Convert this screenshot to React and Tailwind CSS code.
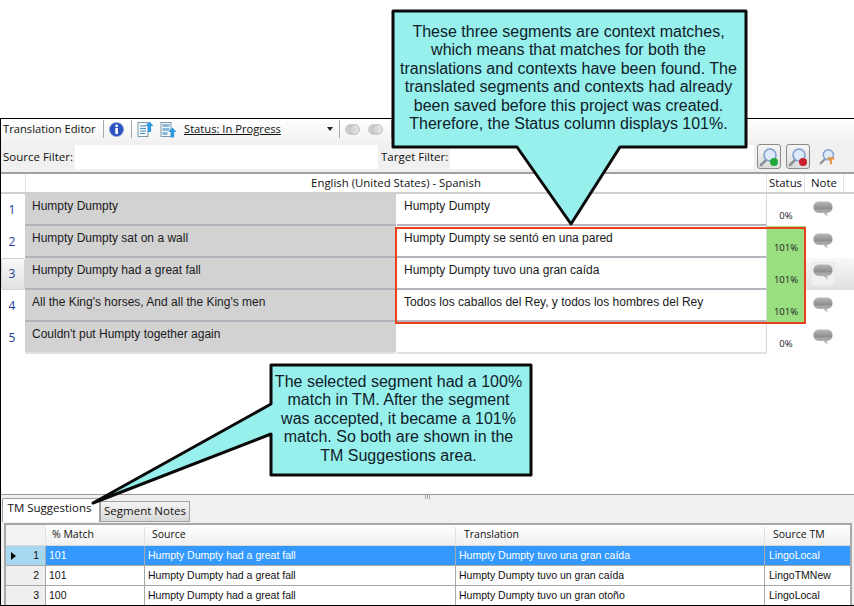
const segments = [
  { n: 1, source: "Humpty Dumpty", target: "Humpty Dumpty", status: "0%" },
  { n: 2, source: "Humpty Dumpty sat on a wall", target: "Humpty Dumpty se sentó en una pared", status: "101%" },
  { n: 3, source: "Humpty Dumpty had a great fall", target: "Humpty Dumpty tuvo una gran caída", status: "101%", active: true },
  { n: 4, source: "All the King's horses, And all the King's men", target: "Todos los caballos del Rey, y todos los hombres del Rey", status: "101%" },
  { n: 5, source: "Couldn't put Humpty together again", target: "", status: "0%", last: true },
];

const suggestions = [
  { n: 1, match: "101", source: "Humpty Dumpty had a great fall", target: "Humpty Dumpty tuvo una gran caída", tm: "LingoLocal", selected: true },
  { n: 2, match: "101", source: "Humpty Dumpty had a great fall", target: "Humpty Dumpty tuvo un gran caída", tm: "LingoTMNew" },
  { n: 3, match: "100", source: "Humpty Dumpty had a great fall", target: "Humpty Dumpty tuvo un gran otoño", tm: "LingoLocal" },
];

function Sep() {
  return <div className="h-[18px] w-px bg-[#a8a8a8]" />;
}

function InfoIcon() {
  return (
    <svg width="15" height="15" viewBox="0 0 15 15">
      <circle cx="7.5" cy="7.5" r="7" fill="#2a52c0" stroke="#8a9ad0" strokeWidth="0.8" />
      <rect x="6.3" y="6" width="2.6" height="6" fill="#fff" />
      <circle cx="7.6" cy="3.9" r="1.4" fill="#fff" />
    </svg>
  );
}

function DocArrowIcon({ variant }) {
  return (
    <svg width="17" height="17" viewBox="0 0 17 17">
      <rect x="1" y="1.5" width="10" height="14" fill="#f4f8fa" stroke="#7f98a8" />
      {variant === "a" ? (
        <>
          <path d="M3 5h6M3 7.5h6M3 10h6M3 12.5h5" stroke="#4a90c8" strokeWidth="1" />
          <path d="M12.5 0.5l4 4.5h-2.4v6h-3.2v-6h-2.4z" fill="#2b9be0" />
        </>
      ) : (
        <>
          <rect x="2.5" y="3" width="7" height="3" fill="#8ab8d8" />
          <rect x="2.5" y="7" width="7" height="3" fill="#8ab8d8" />
          <rect x="2.5" y="11" width="5" height="3" fill="#8ab8d8" />
          <path d="M12.5 6.5l4 4.5h-2.4v5.5h-3.2v-5.5h-2.4z" fill="#2b9be0" />
        </>
      )}
    </svg>
  );
}

function RingsIcon() {
  return (
    <svg width="15" height="13" viewBox="0 0 15 13">
      <circle cx="5.5" cy="6.5" r="4.8" fill="#d0d0d0" stroke="#bcbcbc" />
      <circle cx="9.5" cy="6.5" r="4.8" fill="#dcdcdc" fillOpacity="0.7" stroke="#b4b4b4" />
    </svg>
  );
}

function MagnifierIcon({ dot, size = 20 }) {
  return (
    <svg width={size} height={size} viewBox="0 0 20 20">
      <path d="M2 18l6-6" stroke="#8a8f98" strokeWidth="2.6" strokeLinecap="round" />
      <circle cx="11" cy="8" r="6" fill="#dbe9f8" stroke="#7f9fd0" strokeWidth="1.6" />
      {dot === "tool" ? (
        <path d="M10 11h8v2.4h-2.8V19h-2.4v-5.6H10z" fill="#e8943a" />
      ) : (
        <circle cx="15" cy="15" r="4" fill={dot} />
      )}
    </svg>
  );
}

function NoteIcon() {
  return (
    <svg width="20" height="17" viewBox="0 0 20 17">
      <defs>
        <linearGradient id="noteFill" x1="0" y1="0" x2="0" y2="1">
          <stop offset="0" stopColor="#b8b8b8" />
          <stop offset="0.45" stopColor="#8e8e8e" />
          <stop offset="0.55" stopColor="#a4a4a4" />
          <stop offset="1" stopColor="#c0c0c0" />
        </linearGradient>
      </defs>
      <path d="M6 .5h8c3.300 0 5.500 2.300 5.500 5.800s-2.200 5.700-5.500 5.700h-.2l1.400 4-4.800-4H6C2.700 12 .5 9.800.5 6.300S2.700.5 6 .5z" fill="url(#noteFill)" />
    </svg>
  );
}

function FilterButton({ dot }) {
  return (
    <div className="flex h-[25px] w-[24px] items-center justify-center rounded-[3px] border border-[#8a8a8a] bg-gradient-to-b from-[#f6f6f6] to-[#dcdcdc]">
      <MagnifierIcon dot={dot} />
    </div>
  );
}

function Toolbar() {
  return (
    <div className="font-['Open_Sans',sans-serif] text-[#111]">
      <div className="flex h-[22px] items-center bg-gradient-to-b from-white to-[#f3f3f3] pb-[2px] text-[11.2px]">
        <span className="ml-[2px] w-[100px] whitespace-nowrap">Translation Editor</span>
        <Sep />
        <div className="ml-[5px] flex w-[22px]"><InfoIcon /></div>
        <Sep />
        <div className="ml-[5px] flex w-[23px]"><DocArrowIcon variant="a" /></div>
        <div className="flex w-[24px]"><DocArrowIcon variant="b" /></div>
        <span className="w-[143px] underline">Status: In Progress</span>
        <span className="h-0 w-0 border-x-[3px] border-t-[4px] border-x-transparent border-t-[#222]" />
        <div className="ml-[6px]"><Sep /></div>
        <div className="ml-[5px] flex w-[23px]"><RingsIcon /></div>
        <div className="flex w-[23px]"><RingsIcon /></div>
        <Sep />
      </div>
      <div className="flex h-[31px] items-center bg-[#f0f0f0] text-[11.5px]">
        <span className="ml-[2px] w-[72px] whitespace-nowrap">Source Filter:</span>
        <div className="h-[24px] w-[303px] bg-white" />
        <span className="ml-[3px] w-[69px] whitespace-nowrap">Target Filter:</span>
        <div className="h-[24px] w-[304px] bg-white" />
        <div className="ml-[3px]"><FilterButton dot="#22a83a" /></div>
        <div className="ml-[5px]"><FilterButton dot="#c8202c" /></div>
        <div className="ml-[9px] flex"><MagnifierIcon dot="tool" size={17} /></div>
      </div>
    </div>
  );
}

function SegmentRow({ row }) {
  const rowLine = row.last ? "border-[#e2e2e6]" : "border-[#b4b4bc]";
  return (
    <div className="flex h-[32px] font-['Liberation_Sans',sans-serif] text-[12px] text-[#1a1a1a]">
      <div className={`flex w-[24px] items-center justify-center pr-[2px] pb-[1px] font-['Open_Sans',sans-serif] text-[#1f3a93] ${row.active ? "rounded-[2px] border border-[#d4d4d4] bg-gradient-to-b from-[#f8f8f8] to-[#e2e2e2]" : ""}`}>
        {row.n}
      </div>
      <div className={`w-[371px] border-b-2 bg-[#d2d2d2] pt-[3px] pl-[7px] ${rowLine}`}>{row.source}</div>
      <div className={`ml-px w-[370px] border-r border-b-2 border-r-[#d8d8dc] bg-white pt-[3px] pl-[7px] ${rowLine}`}>{row.target}</div>
      <div className={`flex w-[39px] items-end justify-center pr-[1px] pb-[3px] font-['Open_Sans',sans-serif] text-[9.5px] ${row.status === "101%" ? "bg-[#9ade82]" : "bg-white"}`}>
        {row.status}
      </div>
      <div className={`flex flex-1 pt-[7px] pl-[7px] ${row.active ? "bg-gradient-to-b from-[#f8f8f8] to-[#e0e0e0]" : ""}`}>
        {row.active ? (
          <div className="mt-[-3px] ml-[-2px] flex h-[24px] w-[24px] items-center justify-center rounded-[3px] border border-[#e8e8e8] bg-[#f0f0f0] pb-[3px]">
            <NoteIcon />
          </div>
        ) : (
          <NoteIcon />
        )}
      </div>
    </div>
  );
}

function SegmentGrid() {
  return (
    <div className="relative h-[320px] bg-white">
      <div className="flex h-[20px] border-b-2 border-[#d0d0d0] font-['Open_Sans',sans-serif] text-[11.4px] text-[#111]">
        <div className="w-[24px]" />
        <div className="flex w-[741px] items-center justify-center border-l border-[#e4e4e4]">English (United States) - Spanish</div>
        <div className="flex w-[38px] items-center justify-center border-l border-[#e4e4e4]">Status</div>
        <div className="flex w-[40px] items-center justify-center border-x border-[#e4e4e4]">Note</div>
      </div>
      {segments.map((row) => (
        <SegmentRow key={row.n} row={row} />
      ))}
      {/* red box round the three context matches */}
      <div className="absolute top-[53px] left-[394px] h-[97px] w-[411px] border-2 border-[#e8401c]" />
    </div>
  );
}

function Tabs() {
  return (
    <div className="flex h-[28px] items-end border-t border-[#9a9a9a] bg-[#f0f0f0] pl-px font-['Open_Sans',sans-serif] text-[11.5px] text-[#111]">
      <div className="flex h-[24px] w-[98px] items-center justify-center rounded-t-[2px] border-x border-t border-[#a0a0a0] bg-white pr-[3px] pb-[5px]">TM Suggestions</div>
      <div className="flex h-[21px] w-[90px] items-center justify-center border-x border-t border-b border-[#a0a0a0] bg-gradient-to-b from-[#f4f4f4] to-[#d8d8d8] pb-[2px]">Segment Notes</div>
    </div>
  );
}

function SuggestionGrid() {
  return (
    <div className="bg-[#f0f0f0] pt-[1px] pl-[3px]">
      <div className="w-[848px] border-x-2 border-t-2 border-[#a8a8a8] bg-white font-['Liberation_Sans',sans-serif] text-[10.5px] text-[#111]">
        <div className="flex h-[21px] items-center border-b border-[#d8d8d8] bg-gradient-to-b from-white to-[#f0f0f0] font-['Open_Sans',sans-serif]">
          <div className="h-full w-[39px] bg-[#f2f2f2]" />
          <div className="w-[99px] border-l border-[#e0e0e0] pl-[6px]">% Match</div>
          <div className="w-[311px] border-l border-[#e0e0e0] pl-[7px]">Source</div>
          <div className="w-[309px] border-l border-[#e0e0e0] pl-[8px]">Translation</div>
          <div className="flex-1 border-l border-[#e0e0e0] pl-[8px]">Source TM</div>
        </div>
        {suggestions.map((row) => (
          <div key={row.n} className={`flex h-[20px] items-center border-b border-[#a8a8a8] ${row.selected ? "bg-[#3399ff] text-white" : "text-[#111]"}`}>
            <div className={`relative flex h-full w-[39px] items-center justify-end pr-[6px] text-[#111] ${row.selected ? "bg-[#a8d8f0]" : "bg-[#efefef]"}`}>
              {row.selected && <span className="absolute left-[5px] h-0 w-0 border-y-[4px] border-l-[5px] border-y-transparent border-l-black" />}
              {row.n}
            </div>
            <div className="flex h-full w-[99px] items-center border-l border-[#a8a8a8] pl-[3px]">{row.match}</div>
            <div className="flex h-full w-[311px] items-center border-l border-[#a8a8a8] pl-[3px]">{row.source}</div>
            <div className="flex h-full w-[309px] items-center border-l border-[#a8a8a8] pl-[3px]">{row.target}</div>
            <div className="flex h-full flex-1 items-center border-l border-[#a8a8a8] pl-[4px]">{row.tm}</div>
          </div>
        ))}
      </div>
    </div>
  );
}

function Callouts() {
  return (
    <>
      {/* top callout, box with a pointer down into the status rows */}
      <svg className="absolute top-0 left-0" width="854" height="606">
        <path d="M393 11h353v136H620L571 224 517 147H393z" fill="#97f0ec" stroke="#0a0a0a" strokeWidth="3" strokeLinejoin="round" />
        <path d="M271 365h260v110H271v-41L93 503 271 404z" fill="#97f0ec" stroke="#0a0a0a" strokeWidth="3" strokeLinejoin="round" />
      </svg>
      <div className="absolute top-[23px] left-[395px] w-[347px] text-center font-['Liberation_Sans',sans-serif] text-[16px] leading-[18.400px] text-[#10202a]">
        These three segments are context matches,<br />
        which means that matches for both the<br />
        translations and contexts have been found. The<br />
        translated segments and contexts had already<br />
        been saved before this project was created.<br />
        Therefore, the Status column displays 101%.
      </div>
      <div className="absolute top-[373px] left-[271px] w-[255px] text-center font-['Liberation_Sans',sans-serif] text-[16px] leading-[18.400px] text-[#10202a]">
        The selected segment had a 100%<br />
        match in TM. After the segment<br />
        was accepted, it became a 101%<br />
        match. So both are shown in the<br />
        TM Suggestions area.
      </div>
    </>
  );
}

export default function App() {
  return (
    <div className="relative h-[606px] w-[854px] overflow-hidden bg-white">
      <div className="h-[118px]" />
      <div className="h-[488px] overflow-hidden border-t border-b border-l border-black">
        <div className="border-b-2 border-[#a0a0a0]">
          <Toolbar />
        </div>
        <SegmentGrid />
        <div className="relative">
          <div className="absolute top-[1px] left-[424px] flex gap-px">
            <span className="h-[4px] w-px bg-[#aaa]" />
            <span className="h-[4px] w-px bg-[#aaa]" />
            <span className="h-[4px] w-px bg-[#aaa]" />
          </div>
          <Tabs />
        </div>
        <SuggestionGrid />
      </div>
      <Callouts />
    </div>
  );
}
